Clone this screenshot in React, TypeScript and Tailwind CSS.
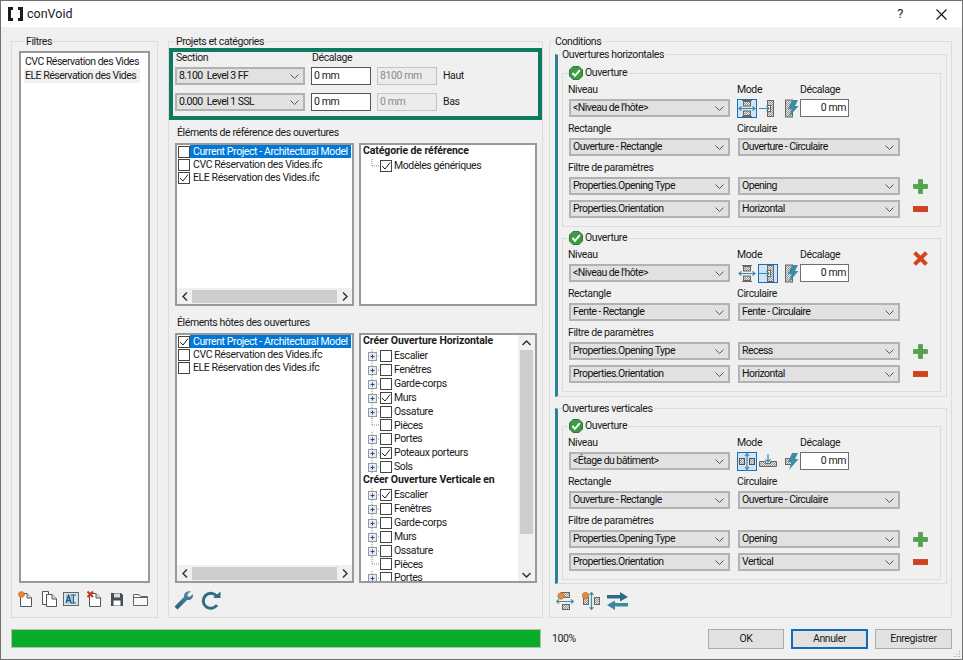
import React from "react";

const Chevron = () => (
  <svg width="9" height="5" viewBox="0 0 9 5" className="shrink-0">
    <path d="M0.5 0.5 L4.5 4.5 L8.5 0.5" fill="none" stroke="#555" strokeWidth="1" />
  </svg>
);

const Select = ({ value, className = "" }: { value: string; className?: string }) => (
  <div className={`h-[18px] bg-[#e1e1e1] border-2 border-[#b2b2b2] flex items-center justify-between pl-[2px] pr-[4px] text-[#111] tracking-[-0.55px] whitespace-nowrap ${className}`}>
    <span>{value}</span>
    <Chevron />
  </div>
);

const Check = ({ on = false }: { on?: boolean }) => (
  <span className="w-[12px] h-[12px] shrink-0 bg-white border border-[#444] flex items-center justify-center">
    {on && (
      <svg width="10" height="10" viewBox="0 0 10 10">
        <path d="M1 5 L4 8 L9 1.5" fill="none" stroke="#222" strokeWidth="1" />
      </svg>
    )}
  </span>
);

const ListRow = ({ label, on = false, selected = false }: { label: string; on?: boolean; selected?: boolean }) => (
  <div className="h-[13px] flex items-center pl-[1px] whitespace-nowrap">
    <Check on={on} />
    <span className={`pl-[3px] flex-1 h-[13px] leading-[13px] mr-[1px] ${selected ? "bg-[#0078d7] text-white" : ""}`}>{label}</span>
  </div>
);

const TreeRow = ({ label, on = false, leaf = false }: { label: string; on?: boolean; leaf?: boolean }) => (
  <div className="h-[13.9px] -ml-[2px] flex items-center whitespace-nowrap">
    <svg width="19" height="14" viewBox="0 0 19 14" className="shrink-0">
      <path d={leaf ? "M11 0 V7 M11 7 H19" : "M11 0 V14 M15 7 H19"} stroke="#8a8a8a" strokeWidth="1" strokeDasharray="1 1" fill="none" />
      {!leaf && (
        <>
          <rect x="7.5" y="3.5" width="8" height="8" fill="#e6ecf5" stroke="#9a9a9a" />
          <path d="M9.5 7.5 H13.5 M11.5 5.5 V9.5" stroke="#2b4a7d" strokeWidth="1" />
        </>
      )}
    </svg>
    <Check on={on} />
    <span className="ml-[2px]">{label}</span>
  </div>
);

const Arrow = ({ d }: { d: string }) => (
  <svg width="9" height="6" viewBox="0 0 9 6">
    <path d={d} fill="none" stroke="#333" strokeWidth="1.5" />
  </svg>
);

const HScroll = () => (
  <div className="h-[16px] flex items-center shrink-0 bg-[#f0f0f0]">
    <div className="w-[15px] flex justify-center">
      <svg width="6" height="9" viewBox="0 0 6 9"><path d="M5 0.5 L1 4.5 L5 8.5" fill="none" stroke="#333" strokeWidth="1.5" /></svg>
    </div>
    <div className="h-[13px] flex-1 bg-[#cdcdcd]" />
    <div className="w-[15px] flex justify-center">
      <svg width="6" height="9" viewBox="0 0 6 9"><path d="M1 0.5 L5 4.5 L1 8.5" fill="none" stroke="#333" strokeWidth="1.5" /></svg>
    </div>
  </div>
);

const VScroll = () => (
  <div className="w-[17px] shrink-0 flex flex-col items-center bg-[#f0f0f0]">
    <div className="h-[15px] flex items-center justify-center"><Arrow d="M0.5 5 L4.5 1 L8.5 5" /></div>
    <div className="w-[13px] h-[184px] bg-[#cdcdcd]" />
    <div className="flex-1 flex items-end justify-center pb-[3px]"><Arrow d="M0.5 1 L4.5 5 L8.5 1" /></div>
  </div>
);

const Hatch = () => (
  <defs>
    <pattern id="hatch" width="2" height="2" patternUnits="userSpaceOnUse">
      <rect width="2" height="2" fill="#e4e4e4" />
      <path d="M0 2 L2 0" stroke="#777" strokeWidth="0.7" />
    </pattern>
  </defs>
);

const TEAL = "#3f8ba5";

const ThroughH = () => (
  <svg width="18" height="17" viewBox="0 0 18 17">
    <Hatch />
    <path d="M4 0.5 H14 M4 16.5 H14" stroke="#666" />
    <rect x="5.5" y="1.5" width="7" height="4.5" fill="url(#hatch)" stroke="#666" />
    <rect x="5.5" y="11" width="7" height="4.5" fill="url(#hatch)" stroke="#666" />
    <path d="M1 8.5 H17 M3.5 6.5 L1 8.5 L3.5 10.5 M14.5 6.5 L17 8.5 L14.5 10.5" fill="none" stroke={TEAL} strokeWidth="1.2" />
  </svg>
);

const BlindH = () => (
  <svg width="18" height="17" viewBox="0 0 18 17">
    <Hatch />
    <rect x="8.5" y="0.5" width="6" height="16" fill="url(#hatch)" stroke="#666" />
    <rect x="8.5" y="5.5" width="3" height="6" fill="#fff" stroke="#666" />
    <path d="M0 8.5 H10 M7.5 6 L10 8.5 L7.5 11" fill="none" stroke={TEAL} strokeWidth="1.2" />
  </svg>
);

const Bolt = ({ vertical = false }: { vertical?: boolean }) => (
  <svg width="14" height="19" viewBox="0 0 14 19">
    <Hatch />
    {vertical ? (
      <rect x="0.5" y="6.5" width="6" height="6" fill="url(#hatch)" stroke="#666" />
    ) : (
      <rect x="0.5" y="1" width="7" height="17" fill="url(#hatch)" stroke="#666" />
    )}
    <path d="M7 1 H13 L10 7 H13.5 L4 18 L6.5 10 H3 Z" fill={TEAL} />
  </svg>
);

const ThroughV = () => (
  <svg width="18" height="17" viewBox="0 0 18 17">
    <Hatch />
    <rect x="1.5" y="5.5" width="5" height="6" fill="url(#hatch)" stroke="#555" />
    <rect x="11.5" y="5.5" width="5" height="6" fill="url(#hatch)" stroke="#555" />
    <path d="M9 0.5 V16.5 M7 3 L9 0.5 L11 3 M7 14 L9 16.5 L11 14" fill="none" stroke={TEAL} strokeWidth="1.2" />
  </svg>
);

const BlindV = () => (
  <svg width="18" height="17" viewBox="0 0 18 17">
    <Hatch />
    <path d="M0.5 8.5 H6.5 V10.5 H11.5 V8.5 H17.5 V13.5 H0.5 Z" fill="url(#hatch)" stroke="#666" />
    <path d="M9 1 V9 M6.5 6.5 L9 9 L11.5 6.5" fill="none" stroke={TEAL} strokeWidth="1.2" />
  </svg>
);

const ModeBox = ({ selected = false, children }: { selected?: boolean; children: React.ReactNode }) => (
  <div className={`w-[20px] h-[19px] flex items-center justify-center shrink-0 border ${selected ? "border-[#1c6db5] bg-[#cfe4f7]" : "border-transparent"}`}>
    {children}
  </div>
);

const CheckBadge = () => (
  <svg width="14" height="14" viewBox="0 0 14 14" className="shrink-0">
    <path d="M4 0.5 H10 L13.5 4 V10 L10 13.5 H4 L0.5 10 V4 Z" fill="#3d9a42" stroke="#2c7a33" />
    <path d="M3.5 7 L6 9.8 L10.8 4.2" fill="none" stroke="#fff" strokeWidth="2" />
  </svg>
);

const Plus = () => (
  <svg width="15" height="15" viewBox="0 0 15 15">
    <path d="M5.5 0.5 H9.5 V5.5 H14.5 V9.5 H9.5 V14.5 H5.5 V9.5 H0.5 V5.5 H5.5 Z" fill="#4fa64a" stroke="#3b8a3a" strokeWidth="0.6" />
  </svg>
);

const Minus = () => (
  <svg width="15" height="6" viewBox="0 0 15 6">
    <rect x="0.3" y="0.3" width="14.4" height="5.4" fill="#d2401c" stroke="#b8340f" strokeWidth="0.6" />
  </svg>
);

const Cross = () => (
  <svg width="15" height="15" viewBox="0 0 15 15">
    <path d="M0.5 3 L3 0.5 L7.5 5 L12 0.5 L14.5 3 L10 7.5 L14.5 12 L12 14.5 L7.5 10 L3 14.5 L0.5 12 L5 7.5 Z" fill="#d8431c" stroke="#b8340f" strokeWidth="0.5" />
  </svg>
);

const Label = ({ children, className = "" }: { children: React.ReactNode; className?: string }) => (
  <div className={`-ml-px flex items-center whitespace-nowrap ${className}`}>{children}</div>
);

type OuvertureProps = {
  niveau: string;
  rect: string;
  circ: string;
  value: string;
  orient: string;
  mode: 1 | 2;
  vertical?: boolean;
  removable?: boolean;
  className?: string;
};

const Ouverture = ({ niveau, rect, circ, value, orient, mode, vertical = false, removable = false, className = "" }: OuvertureProps) => (
  <fieldset className={`ml-[4px] w-[379px] border border-[#dcdcdc] pl-[6px] ${className}`}>
    <legend className="h-[14px] flex items-center gap-[2px] pr-[1px]">
      <CheckBadge />
      <span>Ouverture</span>
    </legend>
    <div className="grid grid-cols-[161px_162px_1fr] gap-x-[8px]">
      <Label className="h-[19px]">Niveau</Label>
      <Label className="h-[19px]">
        <span className="w-[63px]">Mode</span>
        <span>Décalage</span>
      </Label>
      <div className="row-span-2 pl-[5px] pt-[6px]">{removable && <Cross />}</div>

      <Select value={niveau} />
      <div className="flex items-center h-[18px] -ml-[1px]">
        <ModeBox selected={mode === 1}>{vertical ? <ThroughV /> : <ThroughH />}</ModeBox>
        <div className="ml-[1px]">
          <ModeBox selected={mode === 2}>{vertical ? <BlindV /> : <BlindH />}</ModeBox>
        </div>
        <div className="ml-[6px] w-[16px] flex justify-center">
          <Bolt vertical={vertical} />
        </div>
        <div className="h-[18px] w-[49px] bg-white border border-[#6f6f6f] flex items-center justify-end pr-[2px]">0 mm</div>
      </div>

      <Label className="h-[21px] pt-[2px] col-start-1">Rectangle</Label>
      <Label className="h-[21px] pt-[2px]">Circulaire</Label>
      <div />

      <Select value={rect} />
      <Select value={circ} />
      <div />

      <Label className="h-[21px] pt-[2px] col-span-3">Filtre de paramètres</Label>

      <Select value="Properties.Opening Type" />
      <Select value={value} />
      <div className="pl-[5px] flex items-center h-[18px]"><Plus /></div>

      <Select value="Properties.Orientation" className="mt-[5px]" />
      <Select value={orient} className="mt-[5px]" />
      <div className="pl-[5px] flex items-center h-[18px] mt-[5px]"><Minus /></div>
    </div>
  </fieldset>
);

const DocIcon = ({ children }: { children?: React.ReactNode }) => (
  <svg width="16" height="16" viewBox="0 0 16 16">
    <path d="M2.5 2.5 H9 L13.5 7 V15.5 H2.5 Z" fill="#fff" stroke="#555" />
    <path d="M9 2.5 V7 H13.5" fill="#ddd" stroke="#555" />
    {children}
  </svg>
);

const FilterIcons = () => (
  <div className="flex items-center h-[16px]">
    <DocIcon>
      <circle cx="3.5" cy="3.5" r="3" fill="#e8873a" stroke="#d96a1e" strokeDasharray="1 0.6" />
    </DocIcon>
    <svg width="17" height="16" viewBox="0 0 17 16" className="ml-[7px]">
      <path d="M1.5 0.5 H7.5 V13.5 H1.5 Z" fill="#fff" stroke="#555" />
      <path d="M5.5 3.5 H11 L15.5 8 V15.5 H5.5 Z" fill="#fff" stroke="#555" />
      <path d="M11 3.5 V8 H15.5" fill="#ddd" stroke="#555" />
    </svg>
    <svg width="16" height="14" viewBox="0 0 16 14" className="ml-[5px]">
      <rect x="0.5" y="0.5" width="15" height="13" fill="#d5e6f0" stroke="#666" />
      <rect x="3" y="2.5" width="8" height="9" fill="#9cc6dc" />
      <path d="M8 3 H13 M10.5 3 V11 M8 11 H13" stroke="#2d5f75" fill="none" />
      <path d="M3 11 L5.5 3.5 L8 11 M4 8.5 H7" stroke="#1f4f73" fill="none" strokeWidth="1.2" />
    </svg>
    <div className="ml-[8px]">
      <DocIcon>
        <path d="M0.5 0.5 L6 6 M6 0.5 L0.5 6" stroke="#c8321a" strokeWidth="2" />
      </DocIcon>
    </div>
    <svg width="12" height="13" viewBox="0 0 12 13" className="ml-[8px]">
      <path d="M0 0 H10 L12 2 V13 H0 Z" fill="#474d57" />
      <rect x="3" y="0.5" width="6" height="4" fill="#d8dadd" />
      <rect x="2.5" y="7.5" width="7" height="5" fill="#fff" />
    </svg>
    <svg width="15" height="13" viewBox="0 0 15 13" className="ml-[10px]">
      <path d="M0.5 1.5 H6 L7.5 3.5 H14.5 V12.5 H0.5 Z" fill="#f7f7f7" stroke="#666" />
      <path d="M0.5 4.5 H14.5" stroke="#666" />
    </svg>
  </div>
);

const Wrench = () => (
  <svg width="20" height="19" viewBox="0 0 20 19">
    <defs>
      <linearGradient id="steel" x1="0" y1="0" x2="0" y2="1">
        <stop offset="0" stopColor="#4f90a8" />
        <stop offset="1" stopColor="#2d5f75" />
      </linearGradient>
    </defs>
    <path d="M19 3 L15.5 6 L13.5 5 L14 2.5 L17 0.5 C13 -0.5 9.5 2 10 6 L0.5 15.5 L3.5 18.5 L13 9 C17 9.5 19.5 7 19 3 Z" fill="url(#steel)" />
  </svg>
);

const Refresh = () => (
  <svg width="20" height="19" viewBox="0 0 20 19">
    <path d="M15.5 5 A7.5 7.5 0 1 0 16 14" fill="none" stroke="#2f6c83" strokeWidth="3" />
    <path d="M12 7 H19.5 V0.5 Z" fill="#2f6c83" />
  </svg>
);

const Spark = ({ x, y }: { x: number; y: number }) => (
  <circle cx={x} cy={y} r="3.2" fill="#e08a3c" stroke="#c9641d" strokeDasharray="1 0.7" />
);

const Swap = () => (
  <svg width="21" height="18" viewBox="0 0 21 18">
    <path d="M0 3 H13 V0 L21 5 L13 9.5 V6.5 H0 Z" fill="#2f6c83" />
    <path d="M21 11 H8 V8.5 L0 13 L8 18 V14.5 H21 Z" fill="#3d87a1" />
  </svg>
);

const BottomIcons = () => (
  <div className="flex items-center h-[18px] ml-[6px]">
    <svg width="18" height="18" viewBox="0 0 18 18">
      <Hatch />
      <rect x="5.5" y="0.5" width="8" height="5" fill="url(#hatch)" stroke="#666" />
      <rect x="6.5" y="12.5" width="7" height="5" fill="url(#hatch)" stroke="#666" />
      <Spark x={5} y={4} />
      <path d="M0.5 9.5 H17.5 M3 7.5 L0.5 9.5 L3 11.5 M15 7.5 L17.5 9.5 L15 11.5" fill="none" stroke={TEAL} strokeWidth="1.2" />
    </svg>
    <svg width="18" height="18" viewBox="0 0 18 18" className="ml-[8px]">
      <Hatch />
      <rect x="1.5" y="4.5" width="5" height="8" fill="url(#hatch)" stroke="#666" />
      <rect x="12.5" y="5.5" width="5" height="7" fill="url(#hatch)" stroke="#666" />
      <Spark x={3.5} y={3.5} />
      <path d="M9.5 0.5 V17.5 M7.5 3 L9.5 0.5 L11.5 3 M7.5 15 L9.5 17.5 L11.5 15" fill="none" stroke={TEAL} strokeWidth="1.2" />
    </svg>
    <div className="ml-[7px]"><Swap /></div>
  </div>
);

const Btn = ({ label, primary = false, className = "" }: { label: string; primary?: boolean; className?: string }) => (
  <div className={`h-[20px] flex items-center justify-center bg-[#e1e1e1] ${primary ? "border-2 border-[#0f6cbd]" : "border border-[#adadad]"} ${className}`}>
    {label}
  </div>
);

const horizontal = ["Escalier", "Fenêtres", "Garde-corps", "Murs", "Ossature", "Pièces", "Portes", "Poteaux porteurs", "Sols"];
const vertical = ["Escalier", "Fenêtres", "Garde-corps", "Murs", "Ossature", "Pièces", "Portes"];

export default function App() {
  return (
    <div className="w-[963px] h-[660px] overflow-hidden relative flex flex-col bg-[#f0f0f0] border border-[#707070] text-[10.5px] tracking-[-0.4px] text-[#1a1a1a] font-['Roboto',sans-serif]">
      {/* Title bar */}
      <div className="h-[26px] bg-white flex items-center shrink-0">
        <svg width="15" height="14" viewBox="0 0 15 14" className="ml-[7px]">
          <path d="M5 1.5 H1.5 V12.5 H5 M10 1.5 H13.5 V12.5 H10" fill="none" stroke="#1d1d1f" strokeWidth="3" />
        </svg>
        <span className="ml-[4px] text-[12.5px] tracking-normal">conVoid</span>
        <span className="ml-auto mr-[33px] text-[13px]">?</span>
        <svg width="11" height="11" viewBox="0 0 11 11" className="mr-[15px]">
          <path d="M0.5 0.5 L10.5 10.5 M10.5 0.5 L0.5 10.5" stroke="#111" strokeWidth="1.1" />
        </svg>
      </div>

      {/* Main columns */}
      <div className="flex pl-[10px] pt-[7px] h-[591px] shrink-0">
        {/* Filtres */}
        <fieldset className="w-[147px] h-[584px] border border-[#dcdcdc] pl-[7px]">
          <legend className="ml-[6px] h-[14px] leading-[16px] px-[1px]">Filtres</legend>
          <div className="w-[131px] h-[532px] mt-[3px] bg-white border-2 border-[#999] pl-[3px] pt-[2px] whitespace-nowrap tracking-[-0.5px]">
            <div className="h-[14px] leading-[14px] pl-[1px]">CVC Réservation des Vides</div>
            <div className="h-[14px] leading-[14px] pl-[1px] bg-[#f0f0f0] w-[116px]">ELE Réservation des Vides</div>
          </div>
          <div className="mt-[8px] -ml-[1px]"><FilterIcons /></div>
        </fieldset>

        {/* Projets et catégories */}
        <fieldset className="ml-[10px] w-[375px] h-[584px] border border-[#dcdcdc]">
          <legend className="ml-[6px] h-[14px] leading-[16px] px-[1px]">Projets et catégories</legend>
          <div className="h-[72px] border-4 border-[#0d7a5f] pl-[2px]">
            <div className="h-[14px] mb-[1px] flex items-start leading-[11px] whitespace-nowrap pl-[1px]">
              <span className="w-[136px]">Section</span>
              <span>Décalage</span>
            </div>
            <div className="flex items-center gap-[6px]">
              <Select value={"8.100\u00a0\u00a0Level 3 FF"} className="w-[130px]" />
              <div className="w-[60px] h-[18px] bg-white border border-[#555] flex items-center pl-[2px]">0 mm</div>
              <div className="w-[60px] h-[18px] bg-[#ececec] border border-[#c4c4c4] flex items-center pl-[2px] text-[#8a8a8a]">8100 mm</div>
              <span>Haut</span>
            </div>
            <div className="flex items-center gap-[6px] mt-[8px]">
              <Select value={"0.000\u00a0\u00a0Level 1 SSL"} className="w-[130px]" />
              <div className="w-[60px] h-[18px] bg-white border border-[#555] flex items-center pl-[2px]">0 mm</div>
              <div className="w-[60px] h-[18px] bg-[#ececec] border border-[#c4c4c4] flex items-center pl-[2px] text-[#8a8a8a]">0 mm</div>
              <span>Bas</span>
            </div>
          </div>

          <div className="h-[23px] flex items-center pl-[8px] pt-[2px]">Éléments de référence des ouvertures</div>
          <div className="flex pl-[6px] gap-[5px] h-[163px]">
            <div className="w-[179px] bg-white border-2 border-[#999] flex flex-col">
              <div className="flex-1">
                <ListRow label="Current Project - Architectural Model" selected />
                <ListRow label="CVC Réservation des Vides.ifc" />
                <ListRow label="ELE Réservation des Vides.ifc" on />
              </div>
              <HScroll />
            </div>
            <div className="w-[178px] bg-white border-2 border-[#999] pl-[2px]">
              <div className="h-[12px] leading-[12px] mb-[2px] font-bold tracking-[-0.1px] whitespace-nowrap">Catégorie de référence</div>
              <TreeRow label="Modèles génériques" on leaf />
            </div>
          </div>

          <div className="h-[27px] flex items-center pl-[8px] pt-[7px]">Éléments hôtes des ouvertures</div>
          <div className="flex pl-[6px] gap-[5px] h-[250px]">
            <div className="w-[179px] bg-white border-2 border-[#999] flex flex-col">
              <div className="flex-1">
                <ListRow label="Current Project - Architectural Model" on selected />
                <ListRow label="CVC Réservation des Vides.ifc" />
                <ListRow label="ELE Réservation des Vides.ifc" />
              </div>
              <HScroll />
            </div>
            <div className="w-[178px] bg-white border-2 border-[#999] flex overflow-hidden">
              <div className="flex-1 pl-[2px] overflow-hidden">
                <div className="h-[12px] leading-[12px] mb-[2px] font-bold tracking-[-0.1px] whitespace-nowrap">Créer Ouverture Horizontale</div>
                {horizontal.map((t) => (
                  <TreeRow key={t} label={t} on={t === "Murs" || t === "Poteaux porteurs"} leaf={t === "Pièces"} />
                ))}
                <div className="h-[12px] leading-[12px] mb-[2px] font-bold tracking-[-0.1px] whitespace-nowrap">Créer Ouverture Verticale en</div>
                {vertical.map((t) => (
                  <TreeRow key={t} label={t} on={t === "Escalier"} leaf={t === "Pièces"} />
                ))}
              </div>
              <VScroll />
            </div>
          </div>
          <div className="flex items-center gap-[7px] pl-[5px] mt-[8px]">
            <Wrench />
            <Refresh />
          </div>
        </fieldset>

        {/* Conditions */}
        <fieldset className="ml-[6px] w-[403px] h-[584px] border border-[#dcdcdc]">
          <legend className="ml-[4px] h-[14px] leading-[16px] px-[1px]">Conditions</legend>
          <fieldset className="-mt-[1px] ml-[5px] w-[392px] h-[350px] border border-[#dcdcdc] border-l-[3px] border-l-[#2f7f97]">
            <legend className="ml-[3px] h-[14px] leading-[16px] px-[1px]">Ouvertures horizontales</legend>
            <Ouverture className="mt-[5px] h-[161px]" niveau="<Niveau de l'hôte>" rect="Ouverture - Rectangle" circ="Ouverture - Circulaire" value="Opening" orient="Horizontal" mode={1} />
            <Ouverture className="mt-[4px] h-[161px]" niveau="<Niveau de l'hôte>" rect="Fente - Rectangle" circ="Fente - Circulaire" value="Recess" orient="Horizontal" mode={2} removable />
          </fieldset>
          <fieldset className="mt-[4px] ml-[5px] w-[392px] h-[183px] border border-[#dcdcdc] border-l-[3px] border-l-[#2f7f97]">
            <legend className="ml-[3px] h-[14px] leading-[16px] px-[1px]">Ouvertures verticales</legend>
            <Ouverture className="mt-[4px] h-[161px]" niveau="<Étage du bâtiment>" rect="Ouverture - Rectangle" circ="Ouverture - Circulaire" value="Opening" orient="Vertical" mode={1} vertical />
          </fieldset>
          <div className="mt-[8px]"><BottomIcons /></div>
        </fieldset>
      </div>

      {/* Footer */}
      <div className="flex items-start pl-[10px] pt-[11px]">
        <div className="w-[530px] h-[19px] bg-[#09ae28] border border-[#bcbcbc]" />
        <span className="ml-[11px] h-[20px] flex items-center">100%</span>
        <div className="ml-auto mr-[10px] flex gap-[7px]">
          <Btn label="OK" className="w-[76px]" />
          <Btn label="Annuler" primary className="w-[77px]" />
          <Btn label="Enregistrer" className="w-[77px]" />
        </div>
      </div>

      <svg width="8" height="8" viewBox="0 0 8 8" className="absolute right-[1px] bottom-[1px]">
        <path d="M6.5 1 V2 M6.5 3.5 V4.5 M4 3.5 V4.5 M6.5 6 V7 M4 6 V7 M1.5 6 V7" stroke="#a9a9a9" strokeWidth="1" />
      </svg>
    </div>
  );
}
